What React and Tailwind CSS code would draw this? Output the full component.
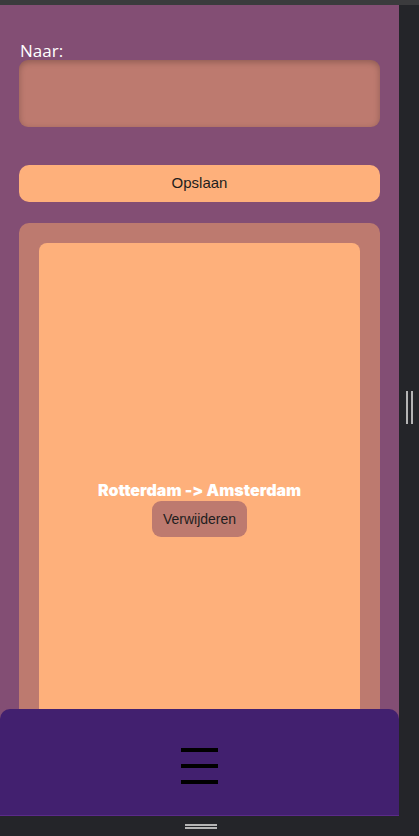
const App = () => {
  return (
    <div className="w-[419px] h-[836px] bg-[#242529] flex flex-col overflow-hidden">
      <div className="h-[5px] bg-[#3b3b3d]" />

      <div className="flex h-[811px]">
        <div className="relative w-[399px] h-full overflow-hidden bg-[#834e74]">
          <div className="px-[19px] pt-[36px]">
            <label className="block text-white text-[17px] leading-[19px] pl-[1px] font-['Open_Sans',sans-serif]">
              Naar:
            </label>
            <div className="h-[67px] rounded-[9px] bg-[#bd7a6f] shadow-[inset_0_2px_6px_rgba(0,0,0,0.25)]" />

            <button className="mt-[38px] w-full h-[37px] rounded-[10px] bg-[#feb07b] text-[15px] text-[#1e1e1e] font-['Liberation_Sans',sans-serif]">
              Opslaan
            </button>

            <div className="mt-[21px] rounded-[10px] bg-[#bd7a6f] p-[20px]">
              <div className="h-[532px] rounded-[8px] bg-[#feb07b] flex flex-col items-center justify-center">
                <h3 className="text-white text-[16px] leading-[18px] font-black font-['Inter',sans-serif] [font-variant-ligatures:none] [font-feature-settings:'calt'_0]">
                  Rotterdam -&gt; Amsterdam
                </h3>
                <button className="mt-[2px] h-[36px] px-[11px] rounded-[9px] bg-[#bd7a6f] text-[14px] text-[#1e1e1e] font-['Liberation_Sans',sans-serif]">
                  Verwijderen
                </button>
              </div>
            </div>
          </div>

          <div className="absolute left-0 right-0 bottom-0 h-[107px] rounded-t-[10px] bg-[#42206f] border-b border-[#5b2a8a] flex justify-center pt-[39px]">
            <div className="flex flex-col gap-[12px] w-[37px]">
              <span className="block h-[4px] bg-black" />
              <span className="block h-[4px] bg-black" />
              <span className="block h-[4px] bg-black" />
            </div>
          </div>
        </div>

        <div className="w-[20px] h-full flex items-center justify-center gap-[3px]">
          <span className="block w-[2px] h-[33px] bg-[#b5b5b5] mt-[-6px]" />
          <span className="block w-[2px] h-[33px] bg-[#b5b5b5] mt-[-6px]" />
        </div>
      </div>

      <div className="h-[20px] flex flex-col items-center justify-center gap-[1px] pr-[18px]">
        <span className="block w-[32px] h-[2px] bg-[#b5b5b5]" />
        <span className="block w-[32px] h-[2px] bg-[#b5b5b5]" />
      </div>
    </div>
  );
};

export default App;
